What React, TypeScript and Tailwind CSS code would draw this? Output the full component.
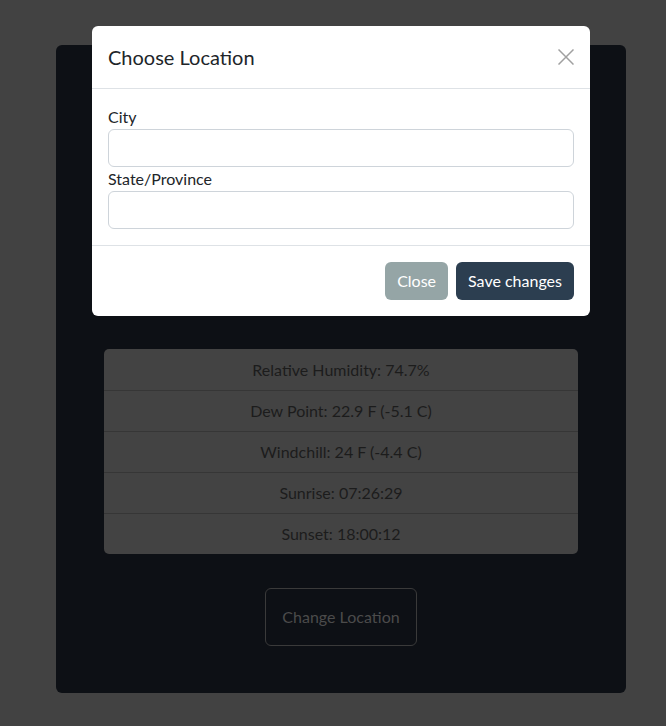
import React from 'react';

const rows = [
  'Relative Humidity: 74.7%',
  'Dew Point: 22.9 F (-5.1 C)',
  'Windchill: 24 F (-4.4 C)',
  'Sunrise: 07:26:29',
  'Sunset: 18:00:12',
];

function LocationModal() {
  return (
    <div className="absolute left-[92px] top-[26px] w-[498px] rounded-[6px] bg-white text-[#212529]">
      <div className="flex items-center justify-between border-b border-[#dee2e6] px-4 py-4">
        <h5 className="text-[20px] leading-[30px]">Choose Location</h5>
        <button className="flex h-4 w-4 items-center justify-center text-[#a0a0a0]">
          <svg width="16" height="16" viewBox="0 0 16 16" fill="none" stroke="currentColor" strokeWidth="1.5">
            <path d="M0.5 0.5l15 15M15.5 0.5l-15 15" />
          </svg>
        </button>
      </div>
      <div className="p-4">
        <label className="block text-base leading-6">City</label>
        <input className="block h-[38px] w-full rounded-[6px] border border-[#ced4da] px-3" />
        <label className="block text-base leading-6">State/Province</label>
        <input className="block h-[38px] w-full rounded-[6px] border border-[#ced4da] px-3" />
      </div>
      <div className="flex justify-end gap-2 border-t border-[#dee2e6] p-4">
        <button className="h-[38px] rounded-[6px] bg-[#95a5a6] px-3 text-base text-white">Close</button>
        <button className="h-[38px] rounded-[6px] bg-[#2c3e50] px-3 text-base text-white">Save changes</button>
      </div>
    </div>
  );
}

export default function App() {
  return (
    <div className="relative min-h-[726px] w-full bg-[#424242] font-['Lato','Liberation_Sans',sans-serif]">
      <div className="pt-[45px] pl-[56px]">
        <div className="flex w-[570px] flex-col items-center rounded-[6px] bg-[#0d1015] px-12 pb-[47px] pt-[304px]">
          <div className="w-full overflow-hidden rounded-[5px] bg-[#434343] pt-px">
            {rows.map((r, i) => (
              <div
                key={r}
                className={`py-2 text-center text-base leading-6 text-[#1c1c1c] ${i > 0 ? 'border-t border-[#363636]' : ''}`}
              >
                {r}
              </div>
            ))}
          </div>
          <button className="mt-[34px] rounded-[6px] border border-[#3a3a3a] p-4 text-base leading-6 text-[#4b4b4b]">
            Change Location
          </button>
        </div>
      </div>
      <LocationModal />
    </div>
  );
}
